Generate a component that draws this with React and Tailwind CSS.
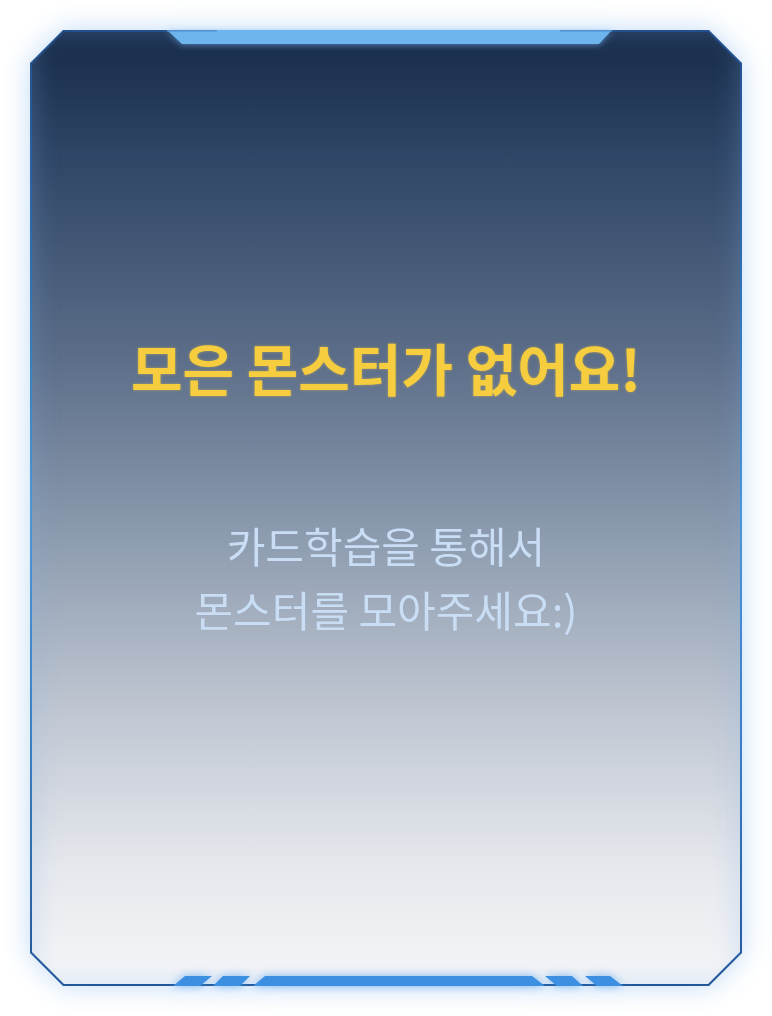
import React from "react";

const FONT = { fontFamily: '"Noto Sans CJK KR", "Noto Sans", sans-serif' };

const BottomStripes = () => (
  <svg
    className="absolute left-0 bottom-0 overflow-visible"
    width="712"
    height="12"
    viewBox="0 0 712 12"
    style={{ filter: "drop-shadow(0 0 4px rgba(80,160,240,0.7))" }}
  >
    <g fill="#3d8fe2">
      <polygon points="143,12 155,2 182,2 170,12" />
      <polygon points="183,12 193,2 220,2 210,12" />
      <polygon points="223,12 235,2 502,2 515,12" />
      <polygon points="527,12 515,2 542,2 553,12" />
      <polygon points="567,12 555,2 580,2 593,12" />
    </g>
  </svg>
);

const TopTab = () => (
  <svg
    className="absolute left-0 top-0 overflow-visible"
    width="712"
    height="16"
    viewBox="0 0 712 16"
    style={{ filter: "drop-shadow(0 1px 3px rgba(110,180,240,0.6))" }}
  >
    <polygon points="137,0 582,0 569,14 152,14" fill="#6db5ec" />
    <rect x="137" y="0" width="50" height="1.5" fill="#4f8fcf" />
    <rect x="530" y="0" width="52" height="1.5" fill="#4f8fcf" />
  </svg>
);

export default function App() {
  return (
    <div className="w-[772px] h-[1016px] bg-white flex items-center justify-center" style={FONT}>
      <div className="relative w-[712px] h-[956px] drop-shadow-[0_0_14px_rgba(120,175,235,0.45)]">
        <div className="absolute inset-0 [clip-path:polygon(33px_0,calc(100%-33px)_0,100%_33px,100%_calc(100%-33px),calc(100%-33px)_100%,33px_100%,0_calc(100%-33px),0_33px)] bg-[linear-gradient(180deg,#234f8c_0%,#2f6fb4_25%,#4a97d8_50%,#3a7fc4_75%,#24579a_100%)]" />
        <div className="absolute inset-[2px] flex flex-col items-center [clip-path:polygon(32px_0,calc(100%-32px)_0,100%_32px,100%_calc(100%-32px),calc(100%-32px)_100%,32px_100%,0_calc(100%-32px),0_32px)] bg-[linear-gradient(180deg,#172a48_0%,#2f4666_13%,#5b6d88_34%,#8a99ad_52%,#c1c8d3_72%,#e6e8ed_88%,#f5f6f8_100%)] shadow-[inset_0_0_28px_rgba(130,180,235,0.3)]">
          <h1 className="mt-[303px] text-[56px] leading-[64px] font-semibold text-[#f6cd3e] [text-shadow:0_0_3px_rgba(246,205,62,0.5)]">
            모은 몬스터가 없어요!
          </h1>
          <p className="mt-[114px] text-[42px] leading-[64px] font-normal text-center text-[#c9ddf5]">
            카드학습을 통해서
            <br />
            몬스터를 모아주세요:)
          </p>
        </div>
        <TopTab />
        <BottomStripes />
      </div>
    </div>
  );
}
